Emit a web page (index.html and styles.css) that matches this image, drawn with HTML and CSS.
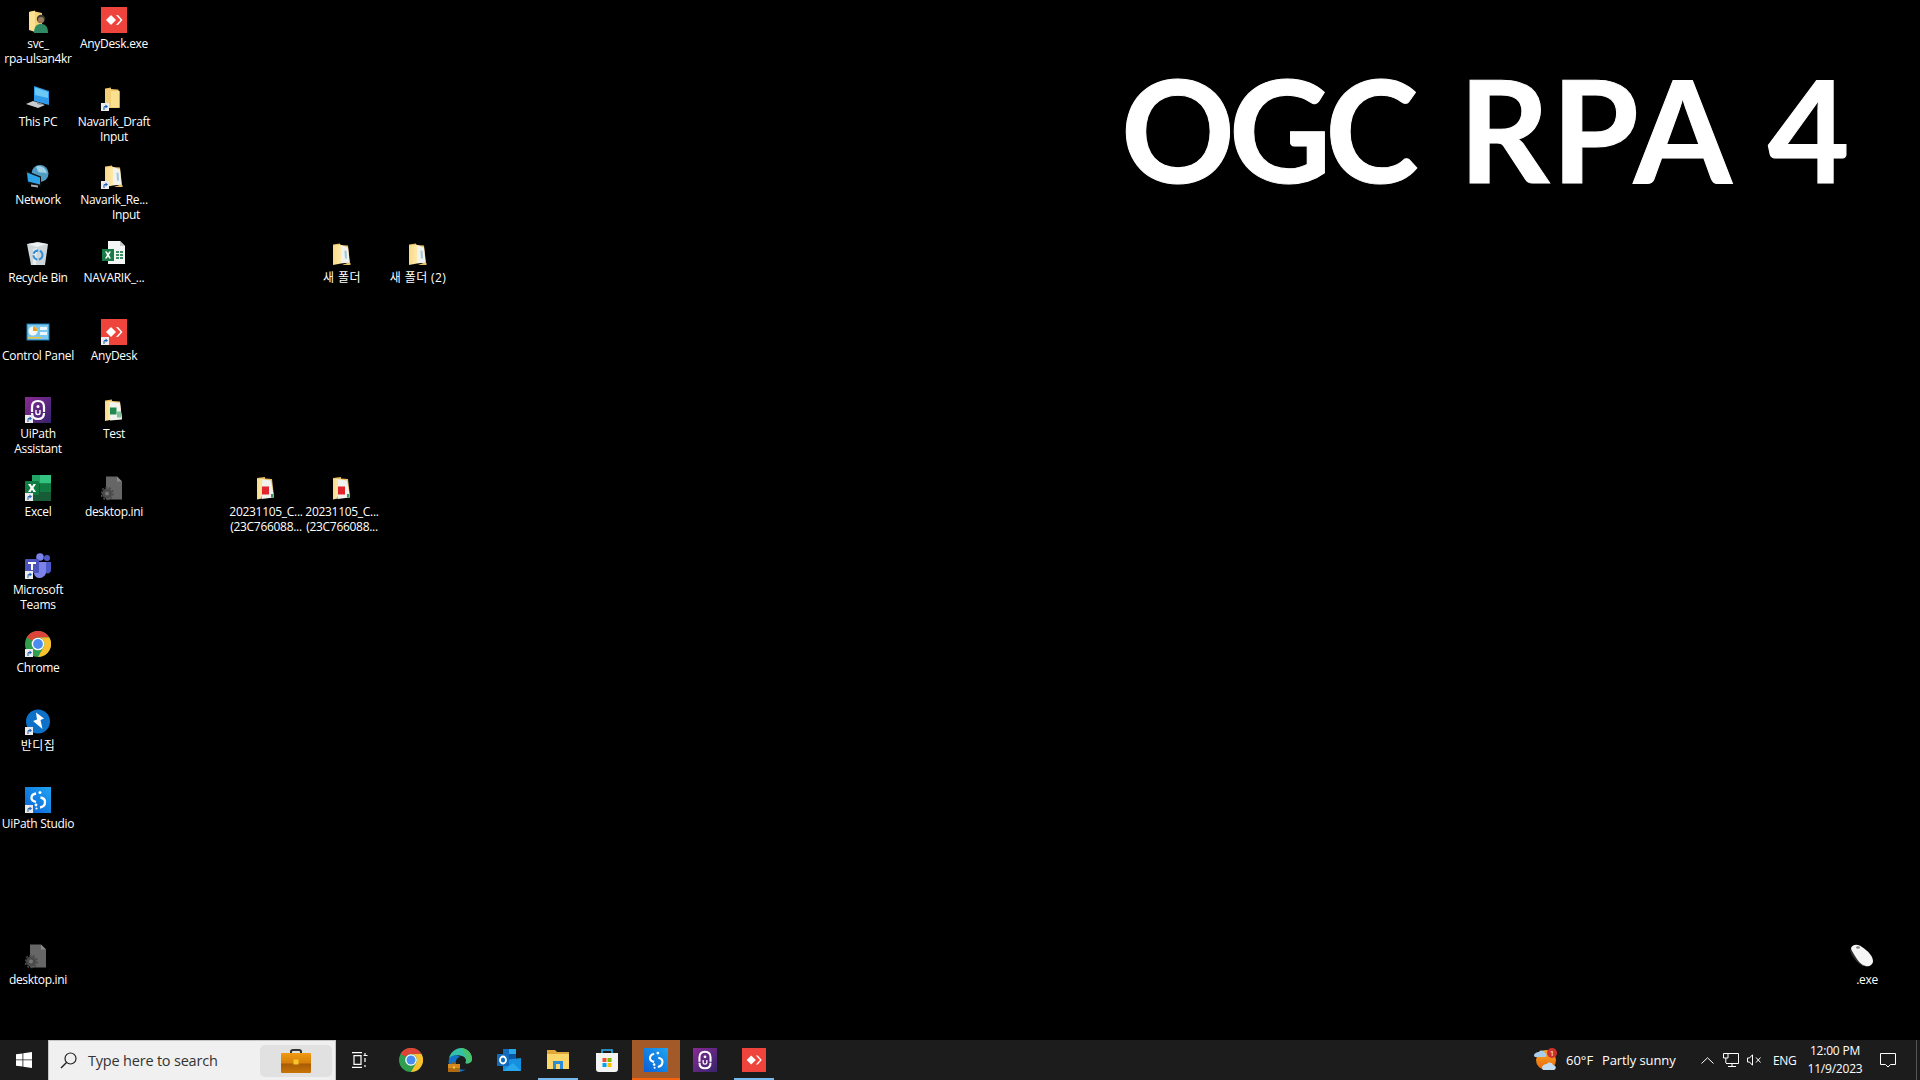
FILE: index.html
```html
<!DOCTYPE html>
<html lang="en">

<head>
    <meta charset="UTF-8">
    <title>Desktop</title>
    <link rel="stylesheet" href="styles.css">
</head>

<body>
    <svg class="sprite" xmlns="http://www.w3.org/2000/svg">
        <defs>
            <linearGradient id="g-assistant" x1="0" y1="0" x2="1" y2="1">
                <stop offset="0" stop-color="#8a2a94" />
                <stop offset="1" stop-color="#35246c" />
            </linearGradient>
            <linearGradient id="g-studio" x1="0" y1="1" x2="1" y2="0">
                <stop offset="0" stop-color="#0a5fd6" />
                <stop offset="1" stop-color="#1fa5f2" />
            </linearGradient>
            <linearGradient id="g-folder" x1="0" y1="0" x2="1" y2="0">
                <stop offset="0" stop-color="#f7d98a" />
                <stop offset="1" stop-color="#ffe9a8" />
            </linearGradient>
            <linearGradient id="g-bag" x1="0" y1="0" x2="0" y2="1">
                <stop offset="0" stop-color="#f09a12" />
                <stop offset="0.5" stop-color="#d67f0a" />
                <stop offset="0.55" stop-color="#a85c05" />
                <stop offset="1" stop-color="#c87408" />
            </linearGradient>
            <linearGradient id="g-sun" x1="0" y1="0" x2="0" y2="1">
                <stop offset="0" stop-color="#f9a825" />
                <stop offset="1" stop-color="#e8650a" />
            </linearGradient>
            <symbol id="i-folder" viewBox="0 0 26 26">
                <g transform="translate(0 2.500)">
                    <path d="M4 1 10 0V1.500L17 2 18.500 4V20.500H4Z" fill="#e9bf62" />
                    <path d="M6 3 18.500 3.500V20L6 20Z" fill="#fbe08f" />
                    <path d="M4 2 10 1V20L4 21Z" fill="#f3cf78" />
                </g>
            </symbol>
            <symbol id="i-folder-paper" viewBox="0 0 26 26">
                <g transform="translate(0 2.500)">
                    <path d="M4 1 11 0V1.500L19 2 21 19.500H4Z" fill="#e9bf62" />
                    <path d="M12 1.500 19 4 20.500 19 12 20Z" fill="#f2f3ef" />
                    <path d="M15.500 7 17.500 7.500 18 15 16 15Z" fill="#9cc7de" />
                    <path d="M18.500 19.500H21.500V21.500H13Z" fill="#eac269" />
                    <path d="M4 2 12 1V20L4 21.500Z" fill="url(#g-folder)" />
                </g>
            </symbol>
            <symbol id="i-folder-xl" viewBox="0 0 26 26">
                <g transform="translate(0 2.500)">
                    <path d="M4 1 11 0V1.500L19 2 21 19.500H4Z" fill="#e9bf62" />
                    <path d="M9 2 19 3.500 21 20 9 21Z" fill="#f2f3ef" />
                    <rect x="8.500" y="8" width="7" height="7" fill="#1e8a4f" />
                    <path d="M16 12H20V18H16Z" fill="#7fc09a" />
                    <path d="M4 2 9 1.500V20.500L4 21.500Z" fill="url(#g-folder)" />
                </g>
            </symbol>
            <symbol id="i-folder-pdf" viewBox="0 0 26 26">
                <g transform="translate(1 2)">
                    <path d="M3 1 11 0V1.500L18 2 20 19.500H3Z" fill="#e9bf62" />
                    <path d="M7.500 2 17 3.500 20 20.500 7.500 22Z" fill="#f1f1ee" />
                    <rect x="8" y="9.500" width="7" height="8" fill="#e0252d" />
                    <rect x="17" y="17" width="2.500" height="3.500" fill="#2f9a5b" />
                    <path d="M3 2 7.500 1.500V21.500L3 22.500Z" fill="url(#g-folder)" />
                </g>
            </symbol>
            <symbol id="i-user" viewBox="0 0 26 26">
                <g transform="translate(2 3)">
                    <path d="M2 2 8 0.500V1.500L15 3V19H2Z" fill="#f3cf78" />
                    <path d="M2 2 8 1V22L2 20Z" fill="#fbe08f" />
                    <circle cx="14" cy="9" r="4.200" fill="#3a3a2e" />
                    <circle cx="14" cy="10" r="3" fill="#9c7a5c" />
                    <path d="M7 23C7 16 10 14 14 14 18 14 21 16 21 23Z" fill="#2f8a64" />
                </g>
            </symbol>
            <symbol id="i-pc" viewBox="0 0 26 26">
                <g transform="translate(0 1)">
                    <path d="M9 0 24 5V19L9 15Z" fill="#2f9be8" />
                    <path d="M10 1.500 23 6V12L10 9Z" fill="#6cc8f7" />
                    <path d="M1 18 8 15 20 19 13 22Z" fill="#c9ccd0" />
                    <path d="M12 16 18 18 16 19 12 18Z" fill="#8c9298" />
                </g>
            </symbol>
            <symbol id="i-network" viewBox="0 0 26 26">
                <g transform="translate(0 1.500)">
                    <circle cx="15" cy="9" r="8.500" fill="#4f9cc4" />
                    <path d="M11 2C15 0 21 3 22 9 18 7 15 9 13 7Z" fill="#9fd0e4" />
                    <path d="M1 6 16 12V22L3 19Z" fill="#111" />
                    <path d="M2 8 15 13V20L3 17Z" fill="#2ea3ea" />
                    <path d="M6 20 13 21V23L6 22Z" fill="#aab0b5" />
                </g>
            </symbol>
            <symbol id="i-recycle" viewBox="0 0 26 26">
                <path d="M2 3 13 1 23 3 20 24H6Z" fill="#cfd6da" />
                <path d="M3 3 12 1.500 22 3 12 6Z" fill="#eef1f2" />
                <path d="M8 8 12 7 11 24H8Z" fill="#e9edef" />
                <circle cx="13" cy="14" r="4.500" fill="none" stroke="#2f8fd8" stroke-width="2" stroke-dasharray="6 1.500" />
            </symbol>
            <symbol id="i-xlsx" viewBox="0 0 26 26">
                <path d="M7 0H19L24 5V23H7Z" fill="#f4f5f5" />
                <path d="M19 0 24 5H19Z" fill="#c4c8ca" />
                <rect x="1" y="8" width="12" height="12" fill="#1a7a45" />
                <path d="M4 10.500H6L7 12.500 8.200 10.500H10L8 14 10 17.500H8.200L7 15.500 5.800 17.500H4L6 14Z" fill="#fff" />
                <path d="M15 10H18V12H15ZM19 10H22V12H19ZM15 13H18V15H15ZM19 13H22V15H19ZM15 16H18V18H15ZM19 16H22V18H19Z" fill="#3d8f63" />
            </symbol>
            <symbol id="i-control" viewBox="0 0 26 26">
                <rect x="2" y="5" width="22" height="16" fill="#7cc9ef" stroke="#1a7fb8" />
                <circle cx="8" cy="12" r="4.500" fill="#f4f8fb" />
                <path d="M8 7.500A4.500 4.500 0 0 1 12.500 12H8Z" fill="#f0a020" />
                <rect x="15" y="8" width="7" height="3" fill="#eaf6fc" />
                <rect x="15" y="13" width="7" height="3" fill="#eaf6fc" />
                <rect x="3" y="18" width="14" height="1.500" fill="#f0c040" />
            </symbol>
            <symbol id="i-anydesk" viewBox="0 0 26 26">
                <rect width="26" height="26" fill="#ef443b" />
                <path d="M10 8 15 13 10 18 5 13Z" fill="#fff" />
                <path d="M15 8H17L21.500 13 17 18H15L19.500 13Z" fill="#fff" />
            </symbol>
            <symbol id="i-assistant" viewBox="0 0 26 26">
                <rect width="26" height="26" fill="url(#g-assistant)" />
                <path d="M7 15V10C7 6 9.500 4 13 4S19 6 19 10V15" fill="none" stroke="#fff" stroke-width="2.200" />
                <path d="M7 16C7 20 9.500 22 13 22S19 20 19 16" fill="none" stroke="#fff" stroke-width="2.200" />
                <circle cx="13" cy="9.500" r="1.500" fill="#fff" />
                <path d="M11 13V16C11 18 15 18 15 16V13" fill="none" stroke="#fff" stroke-width="1.400" />
            </symbol>
            <symbol id="i-excel" viewBox="0 0 26 26">
                <path d="M7 0H26V26H7Z" fill="#185c37" />
                <path d="M15 0H26V8.500H15Z" fill="#33c481" />
                <path d="M15 8.500H26V17H15Z" fill="#107c41" />
                <path d="M7 0H15V8.500H7Z" fill="#21a366" />
                <path d="M7 8.500H15V17H7Z" fill="#185c37" />
                <rect y="6" width="14" height="14" rx="1" fill="#107c41" />
                <path d="M3 9H5.700L7 11.500 8.400 9H11L8.400 13 11 17H8.300L7 14.500 5.700 17H3L5.600 13Z" fill="#fff" />
            </symbol>
            <symbol id="i-ini" viewBox="0 0 26 26">
                <g transform="translate(0 1.500)">
                    <path d="M5 0H16L21 5V23H5Z" fill="#666" />
                    <path d="M16 0 21 5H16Z" fill="#8a8a8a" />
                    <circle cx="6" cy="17" r="5" fill="#4a4a4a" />
                    <circle cx="6" cy="17" r="6" fill="none" stroke="#4a4a4a" stroke-width="1.600" stroke-dasharray="2 1.700" />
                    <circle cx="6" cy="17" r="2" fill="#777" />
                </g>
            </symbol>
            <symbol id="i-teams" viewBox="0 0 26 26">
                <circle cx="15" cy="4" r="3.800" fill="#7b83eb" />
                <circle cx="22" cy="5" r="3" fill="#5059c9" />
                <path d="M18 9H26V17C26 20 23 21 21 20L18 18Z" fill="#5059c9" />
                <path d="M9 9H21V19C21 23 17 25 14 25 11 25 9 22 9 20Z" fill="#7b83eb" />
                <rect y="6" width="14" height="14" rx="1" fill="#4b53bc" />
                <path d="M3 9H11V11H8V17H6V11H3Z" fill="#fff" />
            </symbol>
            <symbol id="i-chrome" viewBox="0 0 26 26">
                <circle cx="13" cy="13" r="13" fill="#2f9e4f" />
                <path d="M1.700 6.500A13 13 0 0 1 24.300 6.500H13A6.500 6.500 0 0 0 7.400 9.800Z" fill="#dd4437" />
                <path d="M24.300 6.500A13 13 0 0 1 13 26L18.600 16.200A6.500 6.500 0 0 0 18.600 9.800 6.500 6.500 0 0 0 13 6.500Z" fill="#fbc02d" />
                <circle cx="13" cy="13" r="6.300" fill="#fff" />
                <circle cx="13" cy="13" r="4.900" fill="#4a8df0" />
            </symbol>
            <symbol id="i-bandizip" viewBox="0 0 26 26">
                <circle cx="13" cy="12.500" r="12" fill="#0d71c9" />
                <path d="M11 3.500 19 9.500 15.500 11 17.500 20 8 12 12 10.500Z" fill="#fff" />
            </symbol>
            <symbol id="i-studio" viewBox="0 0 26 26">
                <rect width="26" height="26" fill="url(#g-studio)" />
                <path d="M11 6.500C7.500 7 6.500 9 6.500 11 6.500 13.500 9 14.500 11 15" fill="none" stroke="#fff" stroke-width="2.300" />
                <path d="M15.500 10.500C18.500 11 20 12.500 20 15 20 18 18 20 15 20.500" fill="none" stroke="#fff" stroke-width="2.300" />
                <circle cx="15" cy="5.500" r="1.500" fill="#fff" />
                <circle cx="11" cy="18" r="1.400" fill="#fff" />
                <circle cx="11.500" cy="21.500" r="1.100" fill="#fff" />
            </symbol>
            <symbol id="i-mouse" viewBox="0 0 26 26">
                <path d="M2 5C4 1 9 1 13 4 19 8 24 13 24 18 24 22 20 24 16 23 11 22 6 16 3 11Z" fill="#f5f5f5" />
                <path d="M1 6C1 11 7 19 11 21 13 22.500 15 23 17 23 12 22 9 18 6 13 4 10 3 7 1 6Z" fill="#2e2e2e" />
                <ellipse cx="9" cy="4.500" rx="2" ry="1.200" fill="#888" />
            </symbol>
            <symbol id="i-link" viewBox="0 0 8 8">
                <rect width="8" height="8" fill="#ececec" />
                <path d="M2.500 7V4.500C2.500 3.500 3 3 4 3H4.500V1.500L7 3.500 4.500 5.500V4H4C3.700 4 3.500 4.300 3.500 5V7Z" fill="#1f5fb4" />
            </symbol>
            <symbol id="i-edge" viewBox="0 0 24 24">
                <path d="M1 11C2 4 8 0 13 0 19 0 24 5 24 11 24 15 20 16 17 15 19 13 18 9 14 8 8 6 3 9 1 11Z" fill="#35c1a9" />
                <path d="M13 0C19 0 24 5 24 11 24 14 21 16 18 15.500 20 11 17 5 13 0Z" fill="#49c26c" />
                <path d="M1 11C3 7 9 6 12 9 8 10 7 14 8 17 10 21 15 23 18 21 15 24 8 25 4 21 1 18 0 15 1 11Z" fill="#1173c7" />
                <path d="M0 16H12V24H0Z" fill="#b06a12" />
                <path d="M0 16H12V20H0Z" fill="#d48a1c" />
                <rect x="4" y="14.500" width="4" height="1.500" fill="#8a5a20" />
                <rect x="5" y="18.500" width="2" height="2" fill="#f5c842" />
            </symbol>
            <symbol id="i-outlook" viewBox="0 0 24 24">
                <path d="M6 1H19V12H6Z" fill="#0f6cbd" />
                <path d="M12 1H19V6H12Z" fill="#28a8ea" />
                <path d="M12 6H19V12H12Z" fill="#0a57a4" />
                <path d="M6 12 24 10V23H6Z" fill="#1490df" />
                <path d="M6 23 16 15 24 23Z" fill="#28a8ea" />
                <rect y="6" width="12" height="12" fill="#0f6cbd" />
                <ellipse cx="6" cy="12" rx="3" ry="3.500" fill="none" stroke="#fff" stroke-width="1.800" />
            </symbol>
            <symbol id="i-explorer" viewBox="0 0 24 24">
                <path d="M1 2H9L11 4H23V7H1Z" fill="#e0a73a" />
                <path d="M1 6H23V21H1Z" fill="#fbd76a" />
                <path d="M7 21V13H17V21H14V16H10V21Z" fill="#2a8bd8" />
            </symbol>
            <symbol id="i-store" viewBox="0 0 24 24">
                <path d="M7 6V2H17V6" fill="none" stroke="#2eaef0" stroke-width="1.600" />
                <path d="M1 5H23V21C23 23 22 24 20 24H4C2 24 1 23 1 21Z" fill="#f4f4f4" />
                <rect x="7.500" y="10" width="4" height="4" fill="#f25022" />
                <rect x="12.500" y="10" width="4" height="4" fill="#7fba00" />
                <rect x="7.500" y="15" width="4" height="4" fill="#00a4ef" />
                <rect x="12.500" y="15" width="4" height="4" fill="#ffb900" />
            </symbol>
            <symbol id="i-briefcase" viewBox="0 0 30 24">
                <path d="M10 6V2.500C10 1.500 11 1 12 1H18C19 1 20 1.500 20 2.500V6" fill="none" stroke="#333" stroke-width="2" />
                <rect y="4" width="30" height="20" rx="1" fill="url(#g-bag)" />
                <rect x="12.500" y="10.500" width="5" height="5" fill="#f7c52a" />
            </symbol>
            <symbol id="i-weather" viewBox="0 0 24 24">
                <circle cx="12" cy="12" r="10" fill="url(#g-sun)" />
                <path d="M0 8C0 5 3 4 5 4 6 2 10 2 11 5 13 5 13 9 11 9H1Z" fill="#a9cdec" />
                <path d="M8 20C8 17 11 16 13 16 14 14 18 14 19 17 22 17 23 21 20 22H9Z" fill="#c4dcf0" />
                <circle cx="18" cy="5" r="5" fill="#d0312d" />
            </symbol>
        </defs>
    </svg>

    <div class="desktop">
        <div class="wallpaper-title"><span class="title-ogc">OGC</span> <span class="title-rpa">RPA</span> 4</div>

        <div class="icon"><svg><use href="#i-user" /></svg><span>svc_<br>rpa-ulsan4kr</span></div>
        <div class="icon"><svg><use href="#i-pc" /></svg><span>This PC</span></div>
        <div class="icon"><svg><use href="#i-network" /></svg><span>Network</span></div>
        <div class="icon"><svg><use href="#i-recycle" /></svg><span>Recycle Bin</span></div>
        <div class="icon"><svg><use href="#i-control" /></svg><span>Control Panel</span></div>
        <div class="icon"><svg><use href="#i-assistant" /></svg><svg class="link"><use href="#i-link" /></svg><span>UiPath<br>Assistant</span></div>
        <div class="icon"><svg><use href="#i-excel" /></svg><svg class="link"><use href="#i-link" /></svg><span>Excel</span></div>
        <div class="icon"><svg><use href="#i-teams" /></svg><svg class="link"><use href="#i-link" /></svg><span>Microsoft<br>Teams</span></div>
        <div class="icon"><svg><use href="#i-chrome" /></svg><svg class="link"><use href="#i-link" /></svg><span>Chrome</span></div>
        <div class="icon ko"><svg><use href="#i-bandizip" /></svg><svg class="link"><use href="#i-link" /></svg><span>반디집</span></div>
        <div class="icon"><svg><use href="#i-studio" /></svg><svg class="link"><use href="#i-link" /></svg><span>UiPath Studio</span></div>
        <div class="icon r13"><svg><use href="#i-ini" /></svg><span>desktop.ini</span></div>

        <div class="icon"><svg><use href="#i-anydesk" /></svg><span>AnyDesk.exe</span></div>
        <div class="icon"><svg><use href="#i-folder" /></svg><svg class="link"><use href="#i-link" /></svg><span>Navarik_Draft<br>Input</span></div>
        <div class="icon"><svg><use href="#i-folder-paper" /></svg><svg class="link"><use href="#i-link" /></svg><span>Navarik_Re...<br><b class="shift-input">Input</b></span></div>
        <div class="icon"><svg><use href="#i-xlsx" /></svg><span>NAVARIK_...</span></div>
        <div class="icon"><svg><use href="#i-anydesk" /></svg><svg class="link"><use href="#i-link" /></svg><span>AnyDesk</span></div>
        <div class="icon"><svg><use href="#i-folder-xl" /></svg><span>Test</span></div>
        <div class="icon"><svg><use href="#i-ini" /></svg><span>desktop.ini</span></div>

        <div class="icon ko c5 r4"><svg><use href="#i-folder-paper" /></svg><span>새 폴더</span></div>
        <div class="icon ko c6 r4"><svg><use href="#i-folder-paper" /></svg><span>새 폴더 (2)</span></div>
        <div class="icon c4 r7"><svg><use href="#i-folder-pdf" /></svg><span>20231105_C...<br>(23C766088...</span></div>
        <div class="icon c5 r7"><svg><use href="#i-folder-pdf" /></svg><span>20231105_C...<br>(23C766088...</span></div>
        <div class="icon c25 r13"><svg><use href="#i-mouse" /></svg><span><b class="shift-exe">.exe</b></span></div>
    </div>

    <div class="taskbar">
        <div class="start">
            <svg width="16" height="16" viewBox="0 0 16 16">
                <path d="M0 2.300 6.500 1.400V7.500H0ZM7.300 1.300 16 0V7.500H7.300ZM0 8.300H6.500V14.600L0 13.700ZM7.300 8.300H16V16L7.300 14.700Z" fill="#fff" />
            </svg>
        </div>
        <div class="search">
            <svg class="search-glass" width="17" height="17" viewBox="0 0 17 17">
                <circle cx="10.500" cy="6.500" r="5.500" fill="none" stroke="#222" stroke-width="1.200" />
                <path d="M6.500 10.500 1 16" stroke="#222" stroke-width="1.400" />
            </svg>
            <span class="search-text">Type here to search</span>
            <div class="search-badge"><svg width="30" height="24"><use href="#i-briefcase" /></svg></div>
        </div>
        <div class="taskview">
            <svg width="16" height="16" viewBox="0 0 16 16" fill="none" stroke="#fff" stroke-width="1.200">
                <path d="M0 .6H10M0 15.400H10M2 3.600H9V12.400H2ZM13 1V3M13 6V10M13 13V15M11.500 3.500H15.500" />
            </svg>
        </div>
        <div class="apps">
            <div class="app"><svg><use href="#i-chrome" /></svg></div>
            <div class="app"><svg><use href="#i-edge" /></svg></div>
            <div class="app"><svg><use href="#i-outlook" /></svg></div>
            <div class="app running"><svg><use href="#i-explorer" /></svg></div>
            <div class="app"><svg><use href="#i-store" /></svg></div>
            <div class="app flagged"><svg><use href="#i-studio" /></svg></div>
            <div class="app"><svg><use href="#i-assistant" /></svg></div>
            <div class="app running"><svg><use href="#i-anydesk" /></svg></div>
        </div>
        <div class="tray">
            <div class="weather">
                <div class="weather-icon">
                    <svg width="24" height="24"><use href="#i-weather" /></svg>
                    <span class="weather-badge">1</span>
                </div>
                <span class="temp">60°F</span>
                <span class="sky">Partly sunny</span>
            </div>
            <svg class="tray-chevron" width="13" height="7" viewBox="0 0 13 7">
                <path d="M.5 6.500 6.500 .8 12.500 6.500" fill="none" stroke="#fff" />
            </svg>
            <svg class="tray-net" width="16" height="14" viewBox="0 0 16 14" fill="none" stroke="#fff">
                <path d="M3 .5H15.500V10.500H3M9 10.500V13.500M5 13.500H13M.5 .5H5V5H.5ZM2.800 5V10" />
            </svg>
            <svg class="tray-vol" width="14" height="12" viewBox="0 0 14 12" fill="none" stroke="#fff">
                <path d="M.5 4H2.500L5.500 .8V11.200L2.500 8H.5ZM9 3.500 13.500 8.500M13.500 3.500 9 8.500" />
            </svg>
            <span class="tray-lang">ENG</span>
            <div class="clock">
                <span>12:00 PM</span>
                <span>11/9/2023</span>
            </div>
            <svg class="tray-note" width="16" height="15" viewBox="0 0 16 15" fill="none" stroke="#fff">
                <path d="M.5 .5H15.500V11.500H10.500L8 14 5.500 11.500H.5Z" />
            </svg>
            <div class="show-desktop"></div>
        </div>
    </div>
</body>

</html>
```

FILE: styles.css
```css
* {
    margin: 0;
    padding: 0;
    box-sizing: border-box;
}

body {
    width: 1920px;
    height: 1080px;
    background: #000;
    color: #fff;
    overflow: hidden;
    font-family: "Open Sans", "Noto Sans CJK KR", sans-serif;
    font-size: 12px;
    display: flex;
    flex-direction: column;
}

.sprite {
    position: absolute;
    width: 0;
    height: 0;
}

/* desktop icons sit on the windows icon grid */
.desktop {
    position: relative;
    height: 1040px;
    display: grid;
    grid-auto-flow: column;
    grid-template-rows: repeat(13, 78px);
    grid-template-columns: repeat(25, 76px);
}

.wallpaper-title {
    position: absolute;
    left: 1121px;
    top: 44px;
    font-family: Lato, sans-serif;
    font-weight: 700;
    font-size: 141px;
    line-height: 169px;
    white-space: nowrap;
    -webkit-text-stroke: 1px #fff;
}

.title-ogc {
    letter-spacing: -6px;
    margin-right: 12px;
}

.title-rpa {
    letter-spacing: 2px;
}

.icon {
    position: relative;
    display: flex;
    flex-direction: column;
    align-items: center;
    padding-top: 7px;
    text-align: center;
    line-height: 15px;
    white-space: nowrap;
    letter-spacing: -0.3px;
}

.icon.ko {
    letter-spacing: 0.4px;
}

.icon svg {
    width: 26px;
    height: 26px;
    flex-shrink: 0;
    margin-bottom: 3px;
}

/* the little arrow on shortcuts */
.icon .link {
    position: absolute;
    left: 25px;
    top: 25px;
    width: 8px;
    height: 8px;
    margin: 0;
}

.icon b {
    font-weight: 400;
    display: inline-block;
}

.shift-input {
    padding-left: 24px;
}

.shift-exe {
    padding-left: 10px;
}

.r4 { grid-row: 4; }
.r7 { grid-row: 7; }
.r13 { grid-row: 13; }
.c4 { grid-column: 4; }
.c5 { grid-column: 5; }
.c6 { grid-column: 6; }
.c25 { grid-column: 25; }

.taskbar {
    height: 40px;
    background: #1c1c1c;
    display: flex;
    align-items: stretch;
}

.start {
    width: 48px;
    display: flex;
    align-items: center;
    justify-content: center;
}

.search {
    width: 288px;
    background: #f0f0f0;
    border: 1px solid #c4c4c4;
    border-bottom: 0;
    display: flex;
    align-items: center;
    padding-left: 11px;
    color: #333;
    font-size: 14.500px;
}

.search-text {
    margin-left: 11px;
    letter-spacing: -0.2px;
}

.search-badge {
    margin-left: auto;
    margin-right: 3px;
    width: 72px;
    height: 32px;
    background: #e1e1e1;
    border-radius: 5px;
    display: flex;
    align-items: center;
    justify-content: center;
}

.taskview {
    width: 48px;
    display: flex;
    align-items: center;
    justify-content: center;
}

.apps {
    display: flex;
    gap: 1px;
    margin-left: 3px;
}

.app {
    width: 48px;
    display: flex;
    align-items: center;
    justify-content: center;
    position: relative;
}

.app svg {
    width: 24px;
    height: 24px;
}

.app.running::after,
.app.flagged::after {
    content: "";
    position: absolute;
    bottom: 0;
    height: 2px;
}

.app.running::after {
    left: 4px;
    right: 4px;
    background: #76b9ed;
}

.app.flagged {
    background: #a35a28;
}

.app.flagged::after {
    left: 0;
    right: 0;
    background: #f7630c;
}

.tray {
    margin-left: auto;
    display: flex;
    align-items: center;
}

.weather {
    display: flex;
    align-items: center;
    margin-right: 25px;
    font-size: 13px;
}

.weather-icon {
    position: relative;
    width: 24px;
    height: 24px;
    margin-right: 8px;
}

.weather-badge {
    position: absolute;
    right: 1px;
    top: 0;
    width: 10px;
    text-align: center;
    font-size: 8px;
    line-height: 10px;
}

.temp {
    width: 36px;
}

.sky {
    width: 74px;
    white-space: nowrap;
    letter-spacing: -0.1px;
}

.tray-chevron {
    margin-right: 9px;
}

.tray-net {
    margin-right: 8px;
}

.tray-vol {
    margin-right: 12px;
}

.tray-lang {
    width: 23px;
    margin-right: 9px;
    letter-spacing: -0.3px;
    text-align: center;
    white-space: nowrap;
}

.clock {
    display: flex;
    flex-direction: column;
    align-items: center;
    width: 60px;
    line-height: 18px;
    margin-right: 15px;
    letter-spacing: -0.2px;
}

.tray-note {
    margin-right: 20px;
}

.show-desktop {
    width: 1px;
    height: 40px;
    margin-right: 3px;
    background: #555;
}
```
